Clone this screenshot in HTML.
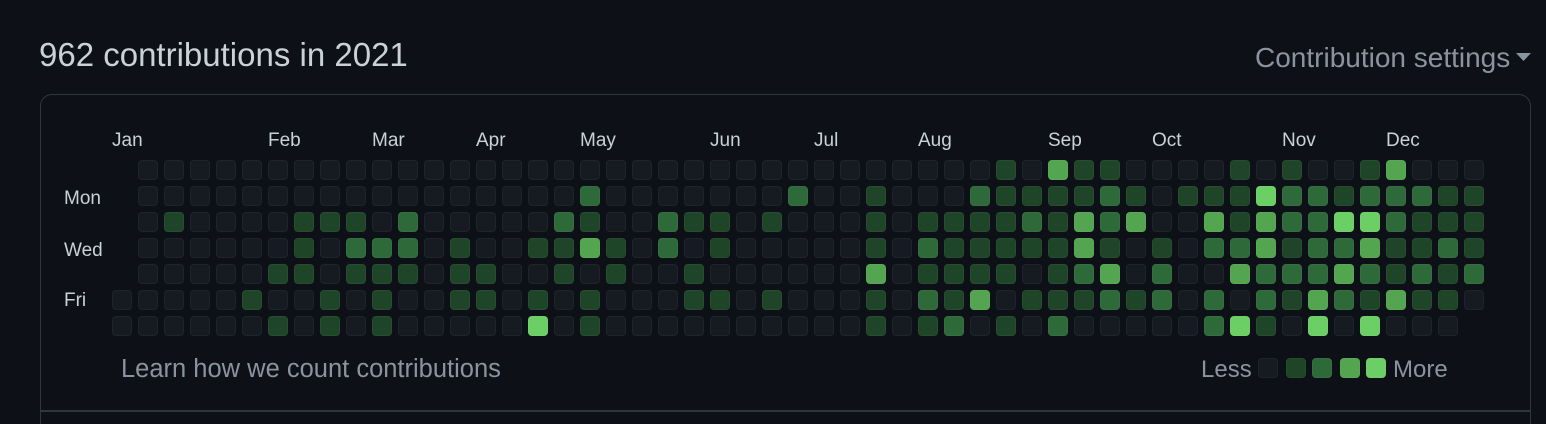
<!DOCTYPE html>
<html><head><meta charset="utf-8"><style>
html,body{margin:0;width:1546px;height:424px;overflow:hidden}
body{background:#0d1117;font-family:"Liberation Sans",sans-serif;position:relative}
.t{position:absolute;white-space:nowrap}
.box{position:absolute;left:40px;top:94px;width:1491px;height:330px;border:1px solid #30363d;border-bottom:none;border-radius:12px 12px 0 0;box-sizing:border-box}
.sep{position:absolute;left:41px;top:410px;width:1489px;height:2px;background:#30363d}
.c{position:absolute;width:20px;height:20px;border-radius:4px;box-sizing:border-box;border:1px solid rgba(255,255,255,0.04)}
.l0{background:#161b22}.l1{background:#1f4528}.l2{background:#2e6a39}.l3{background:#53a550}.l4{background:#6ccf65}
.m{color:#c9d1d9;font-size:19px;top:130px}
.d{color:#c9d1d9;font-size:19px;left:64px}
</style></head><body>
<div class="t" style="left:39px;top:36px;font-size:33px;color:#c9d1d9">962 contributions in 2021</div>
<div class="t" style="left:1255px;top:42px;font-size:28px;color:#8b949e">Contribution settings</div>
<svg style="position:absolute;left:1516px;top:53px" width="16" height="9"><path d="M0 0H15L7.5 8Z" fill="#8b949e"/></svg>
<div class="box"></div>
<div class="sep"></div>
<div class="t m" style="left:112px">Jan</div>
<div class="t m" style="left:268px">Feb</div>
<div class="t m" style="left:372px">Mar</div>
<div class="t m" style="left:476px">Apr</div>
<div class="t m" style="left:580px">May</div>
<div class="t m" style="left:710px">Jun</div>
<div class="t m" style="left:814px">Jul</div>
<div class="t m" style="left:918px">Aug</div>
<div class="t m" style="left:1048px">Sep</div>
<div class="t m" style="left:1152px">Oct</div>
<div class="t m" style="left:1282px">Nov</div>
<div class="t m" style="left:1386px">Dec</div>
<div class="t d" style="top:188px">Mon</div>
<div class="t d" style="top:240px">Wed</div>
<div class="t d" style="top:290px">Fri</div>
<div id="g"></div>
<div class="t" style="left:121px;top:355px;font-size:25.5px;color:#8b949e">Learn how we count contributions</div>
<div class="t" style="left:1201px;top:356px;font-size:24px;color:#8b949e">Less</div>
<div class="c l0" style="left:1258px;top:358px"></div>
<div class="c l1" style="left:1286px;top:358px"></div>
<div class="c l2" style="left:1312px;top:358px"></div>
<div class="c l3" style="left:1340px;top:358px"></div>
<div class="c l4" style="left:1366px;top:358px"></div>
<div class="t" style="left:1393px;top:356px;font-size:24px;color:#8b949e">More</div>
<script>
var L={};
function s(r,list){list.split(' ').forEach(function(p){var a=p.split(':');L[r+','+a[0]]=+a[1];});}
s(0,'34:1 36:3 37:1 38:1 43:1 45:1 48:1 49:3');
s(1,'18:2 26:2 29:1 33:2 34:1 35:1 36:1 37:1 38:2 39:1 41:1 42:1 43:1 44:4 45:2 46:2 47:1 48:2 49:2 50:2 51:1 52:1');
s(2,'2:1 7:1 8:1 9:1 11:2 17:2 18:1 21:2 22:1 23:1 25:1 29:1 31:1 32:1 33:1 34:1 35:2 36:1 37:3 38:2 39:3 42:3 43:1 44:3 45:2 46:2 47:4 48:4 49:2 50:1 51:1 52:1');
s(3,'7:1 9:2 10:2 11:2 13:1 16:1 17:1 18:3 19:1 21:2 23:1 29:1 31:2 32:1 33:1 34:1 35:1 36:1 37:3 38:1 40:1 42:2 43:2 44:3 45:1 46:2 47:2 48:3 49:1 50:1 51:2 52:1');
s(4,'6:1 7:1 9:1 10:1 11:1 13:1 14:1 17:1 19:1 22:1 29:3 31:1 32:1 33:1 34:1 36:1 37:2 38:3 40:2 43:3 44:2 45:2 46:2 47:3 48:2 49:1 50:2 51:1 52:2');
s(5,'5:1 8:1 10:1 13:1 14:1 16:1 18:1 22:1 23:1 25:1 29:1 31:2 32:1 33:3 35:1 36:1 37:1 38:2 39:1 40:2 42:2 44:2 45:1 46:3 47:2 48:1 49:3 50:1 51:1');
s(6,'6:1 8:1 10:1 16:4 18:1 29:1 31:1 32:2 34:1 36:2 42:2 43:4 44:1 46:4 48:4');
var h='';
for(var c=0;c<53;c++)for(var r=0;r<7;r++){
 if(c==0&&r<5)continue; if(c==52&&r==6)continue;
 var v=L[r+','+c]||0;
 h+='<div class="c l'+v+'" style="left:'+(112+26*c)+'px;top:'+(160+26*r)+'px"></div>';
}
document.getElementById('g').innerHTML=h;
</script>
</body></html>
